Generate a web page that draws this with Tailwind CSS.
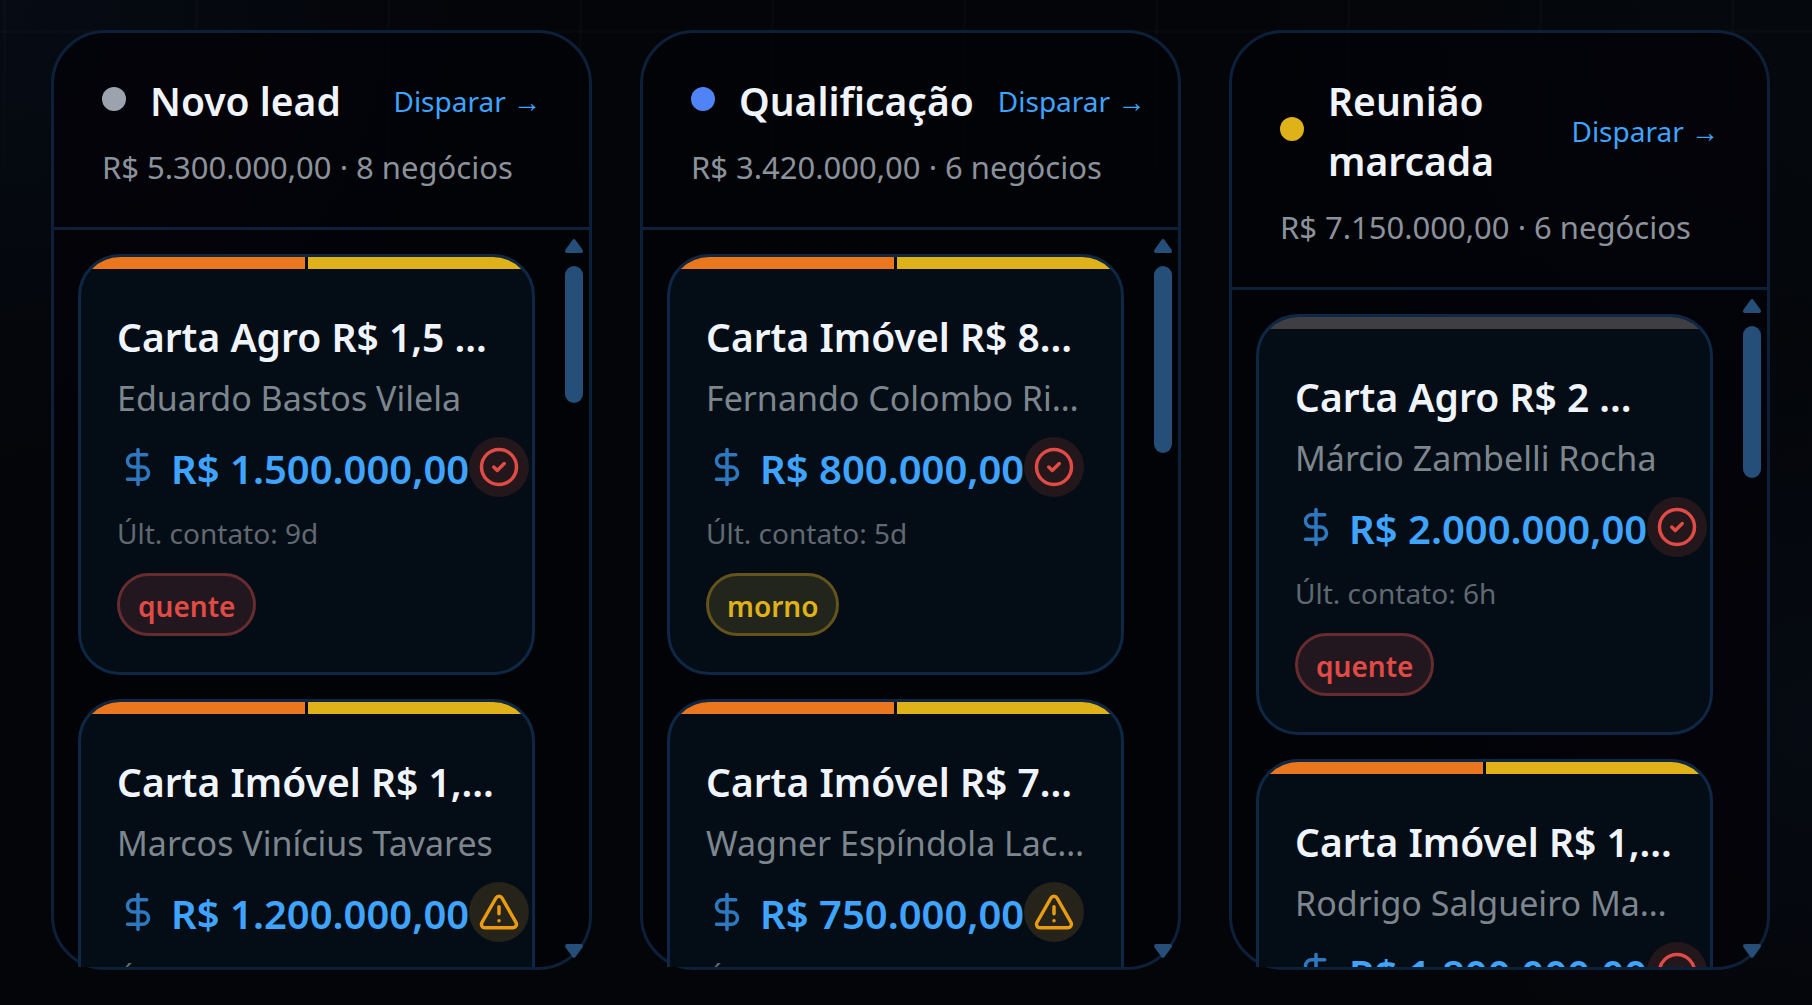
<!DOCTYPE html>
<html lang="pt-BR">
<head>
<meta charset="utf-8">
<meta name="viewport" content="width=device-width, initial-scale=1">
<title>Funil de negócios</title>
<script src="https://cdn.jsdelivr.net/npm/@tailwindcss/browser@4"></script>
</head>
<body class="relative isolate h-screen overflow-hidden bg-[#040509] font-['Noto_Sans','Open_Sans',sans-serif] text-[#f0f4fc]">

<!-- Shared icons -->
<svg class="hidden" aria-hidden="true">
  <symbol id="dollar" viewBox="0 0 24 24"><path d="M12 2v20M17 5H9.5a3.5 3.5 0 0 0 0 7h5a3.5 3.5 0 0 1 0 7H6"/></symbol>
  <symbol id="check" viewBox="0 0 24 24"><circle cx="12" cy="12" r="10"/><path d="m9 12 2 2 4-4"/></symbol>
  <symbol id="alert" viewBox="0 0 24 24"><path d="m21.73 18-8-14a2 2 0 0 0-3.48 0l-8 14A2 2 0 0 0 4 21h16a2 2 0 0 0 1.73-3M12 9v4M12 17h.01"/></symbol>
  <symbol id="up" viewBox="0 0 18 14"><path d="M7.3 1.2Q9-1 10.7 1.2L17.4 10.5Q19 14 15.8 14H2.2Q-1 14 .6 10.5Z"/></symbol>
  <symbol id="down" viewBox="0 0 18 14"><path d="M7.3 12.8Q9 15 10.7 12.8L17.4 3.5Q19 0 15.8 0H2.2Q-1 0 .6 3.5Z"/></symbol>
</svg>

<!-- Backdrop: soft glows and a faint grid -->
<div class="absolute inset-0 -z-10 bg-[radial-gradient(circle_at_0%_0%,#060b14_0%,transparent_22%),radial-gradient(circle_at_100%_72%,#060a12_0%,transparent_20%),radial-gradient(circle_at_100%_0%,#05090d_0%,transparent_26%)]"></div>
<div class="absolute inset-0 -z-10 bg-[linear-gradient(to_right,#ffffff05_3px,transparent_3px),linear-gradient(to_bottom,#ffffff05_3px,transparent_3px)] bg-[length:192px_192px] bg-[position:3px_30px] mask-[linear-gradient(to_bottom,black,transparent_24%)]"></div>

<main class="flex h-full gap-12 pt-[30px] pr-[42px] pb-[35px] pl-[51px]">

  <section class="flex min-w-0 flex-1 flex-col rounded-[54px] border-3 border-[#0d2039] bg-[#020307]/80">
    <header class="border-b-3 border-[#0d2039] px-12 pt-[38px] pb-[35px]">
      <div class="flex items-center justify-between gap-6">
        <div class="flex items-center gap-6">
          <span class="mb-1 size-6 shrink-0 rounded-full bg-[#9ca3af]"></span>
          <h2 class="text-[39px] leading-[60px] font-semibold">Novo lead</h2>
        </div>
        <button type="button" class="shrink-0 text-[28px] leading-[48px] whitespace-nowrap text-[#3fa4ff]">Disparar →</button>
      </div>
      <p class="mt-3 text-[31px] leading-[49px] whitespace-nowrap text-[#8b929b]">R$ 5.300.000,00 · 8 negócios</p>
    </header>
    <div class="flex min-h-0 flex-1 overflow-hidden">
      <ul class="flex min-w-0 flex-1 flex-col gap-6 p-6">
        <li class="shrink-0 overflow-hidden rounded-[42px] border-3 border-[#0e2744] bg-[#040d15]">
          <div class="flex h-3 gap-[3px]"><span class="flex-1 bg-[#ea761e]"></span><span class="flex-1 bg-[#e0b219]"></span></div>
          <div class="px-9 pt-[38px] pb-9 whitespace-nowrap">
            <h3 class="text-[39px] leading-[60px] font-semibold">Carta Agro R$ 1,5 …</h3>
            <p class="text-[34px] leading-[62px] text-[#7d868e]">Eduardo Bastos Vilela</p>
            <div class="mt-2 flex h-[60px] items-center">
              <svg class="mr-3 size-[42px] shrink-0 fill-none stroke-[#2d78bf] stroke-2" stroke-linecap="round" stroke-linejoin="round"><use href="#dollar"/></svg>
              <span class="pt-1 text-[40px] leading-[60px] font-semibold text-[#3fa4ff]">R$ 1.500.000,00</span>
              <span class="flex size-[60px] shrink-0 items-center justify-center rounded-full bg-[#23171c]"><svg class="size-[42px] fill-none stroke-[#e04b46] stroke-2" stroke-linecap="round" stroke-linejoin="round"><use href="#check"/></svg></span>
            </div>
            <p class="mt-3 text-[28px] leading-[48px] text-[#606971]">Últ. contato: 9d</p>
            <span class="mt-4 flex h-[63px] w-fit items-center rounded-full border-3 border-[#672c2e] bg-[#23171f] px-[18px] pt-[2px] text-[28px] font-semibold text-[#e04b46]">quente</span>
          </div>
        </li>
        <li class="shrink-0 overflow-hidden rounded-[42px] border-3 border-[#0e2744] bg-[#040d15]">
          <div class="flex h-3 gap-[3px]"><span class="flex-1 bg-[#ea761e]"></span><span class="flex-1 bg-[#e0b219]"></span></div>
          <div class="px-9 pt-[38px] pb-9 whitespace-nowrap">
            <h3 class="text-[39px] leading-[60px] font-semibold">Carta Imóvel R$ 1,…</h3>
            <p class="text-[34px] leading-[62px] text-[#7d868e]">Marcos Vinícius Tavares</p>
            <div class="mt-2 flex h-[60px] items-center">
              <svg class="mr-3 size-[42px] shrink-0 fill-none stroke-[#2d78bf] stroke-2" stroke-linecap="round" stroke-linejoin="round"><use href="#dollar"/></svg>
              <span class="pt-1 text-[40px] leading-[60px] font-semibold text-[#3fa4ff]">R$ 1.200.000,00</span>
              <span class="flex size-[60px] shrink-0 items-center justify-center rounded-full bg-[#26231a]"><svg class="size-[42px] fill-none stroke-[#e99c12] stroke-2" stroke-linecap="round" stroke-linejoin="round"><use href="#alert"/></svg></span>
            </div>
            <p class="mt-3 text-[28px] leading-[48px] text-[#606971]">Últ. contato: 3d</p>
          </div>
        </li>
      </ul>
      <div class="flex w-[30px] shrink-0 flex-col items-center py-[9px]" aria-hidden="true">
        <svg class="h-[14px] w-[18px] shrink-0 fill-[#254f78]"><use href="#up"/></svg>
        <span class="mt-[13px] h-[137px] w-[18px] rounded-full bg-[#254f78]"></span>
        <svg class="mt-auto h-[14px] w-[18px] shrink-0 fill-[#254f78]"><use href="#down"/></svg>
      </div>
    </div>
  </section>

  <section class="flex min-w-0 flex-1 flex-col rounded-[54px] border-3 border-[#0d2039] bg-[#020307]/80">
    <header class="border-b-3 border-[#0d2039] px-12 pt-[38px] pb-[35px]">
      <div class="flex items-center justify-between gap-6">
        <div class="flex items-center gap-6">
          <span class="mb-1 size-6 shrink-0 rounded-full bg-[#4f83f6]"></span>
          <h2 class="text-[39px] leading-[60px] font-semibold">Qualificação</h2>
        </div>
        <button type="button" class="shrink-0 text-[28px] leading-[48px] whitespace-nowrap text-[#3fa4ff]">Disparar →</button>
      </div>
      <p class="mt-3 text-[31px] leading-[49px] whitespace-nowrap text-[#8b929b]">R$ 3.420.000,00 · 6 negócios</p>
    </header>
    <div class="flex min-h-0 flex-1 overflow-hidden">
      <ul class="flex min-w-0 flex-1 flex-col gap-6 p-6">
        <li class="shrink-0 overflow-hidden rounded-[42px] border-3 border-[#0e2744] bg-[#040d15]">
          <div class="flex h-3 gap-[3px]"><span class="flex-1 bg-[#ea761e]"></span><span class="flex-1 bg-[#e0b219]"></span></div>
          <div class="px-9 pt-[38px] pb-9 whitespace-nowrap">
            <h3 class="text-[39px] leading-[60px] font-semibold">Carta Imóvel R$ 8…</h3>
            <p class="text-[34px] leading-[62px] text-[#7d868e]">Fernando Colombo Ri…</p>
            <div class="mt-2 flex h-[60px] items-center">
              <svg class="mr-3 size-[42px] shrink-0 fill-none stroke-[#2d78bf] stroke-2" stroke-linecap="round" stroke-linejoin="round"><use href="#dollar"/></svg>
              <span class="pt-1 text-[40px] leading-[60px] font-semibold text-[#3fa4ff]">R$ 800.000,00</span>
              <span class="flex size-[60px] shrink-0 items-center justify-center rounded-full bg-[#23171c]"><svg class="size-[42px] fill-none stroke-[#e04b46] stroke-2" stroke-linecap="round" stroke-linejoin="round"><use href="#check"/></svg></span>
            </div>
            <p class="mt-3 text-[28px] leading-[48px] text-[#606971]">Últ. contato: 5d</p>
            <span class="mt-4 flex h-[63px] w-fit items-center rounded-full border-3 border-[#64531a] bg-[#22251b] px-[18px] pt-[2px] text-[28px] font-semibold text-[#dfb11a]">morno</span>
          </div>
        </li>
        <li class="shrink-0 overflow-hidden rounded-[42px] border-3 border-[#0e2744] bg-[#040d15]">
          <div class="flex h-3 gap-[3px]"><span class="flex-1 bg-[#ea761e]"></span><span class="flex-1 bg-[#e0b219]"></span></div>
          <div class="px-9 pt-[38px] pb-9 whitespace-nowrap">
            <h3 class="text-[39px] leading-[60px] font-semibold">Carta Imóvel R$ 7…</h3>
            <p class="text-[34px] leading-[62px] text-[#7d868e]">Wagner Espíndola Lac…</p>
            <div class="mt-2 flex h-[60px] items-center">
              <svg class="mr-3 size-[42px] shrink-0 fill-none stroke-[#2d78bf] stroke-2" stroke-linecap="round" stroke-linejoin="round"><use href="#dollar"/></svg>
              <span class="pt-1 text-[40px] leading-[60px] font-semibold text-[#3fa4ff]">R$ 750.000,00</span>
              <span class="flex size-[60px] shrink-0 items-center justify-center rounded-full bg-[#26231a]"><svg class="size-[42px] fill-none stroke-[#e99c12] stroke-2" stroke-linecap="round" stroke-linejoin="round"><use href="#alert"/></svg></span>
            </div>
            <p class="mt-3 text-[28px] leading-[48px] text-[#606971]">Últ. contato: 3d</p>
          </div>
        </li>
      </ul>
      <div class="flex w-[30px] shrink-0 flex-col items-center py-[9px]" aria-hidden="true">
        <svg class="h-[14px] w-[18px] shrink-0 fill-[#254f78]"><use href="#up"/></svg>
        <span class="mt-[13px] h-[187px] w-[18px] rounded-full bg-[#254f78]"></span>
        <svg class="mt-auto h-[14px] w-[18px] shrink-0 fill-[#254f78]"><use href="#down"/></svg>
      </div>
    </div>
  </section>

  <section class="flex min-w-0 flex-1 flex-col rounded-[54px] border-3 border-[#0d2039] bg-[#020307]/80">
    <header class="border-b-3 border-[#0d2039] px-12 pt-[38px] pb-[35px]">
      <div class="flex items-center justify-between gap-6">
        <div class="flex items-center gap-6">
          <span class="mb-1 size-6 shrink-0 rounded-full bg-[#e0b219]"></span>
          <h2 class="text-[39px] leading-[60px] font-semibold">Reunião marcada</h2>
        </div>
        <button type="button" class="shrink-0 text-[28px] leading-[48px] whitespace-nowrap text-[#3fa4ff]">Disparar →</button>
      </div>
      <p class="mt-3 text-[31px] leading-[49px] whitespace-nowrap text-[#8b929b]">R$ 7.150.000,00 · 6 negócios</p>
    </header>
    <div class="flex min-h-0 flex-1 overflow-hidden">
      <ul class="flex min-w-0 flex-1 flex-col gap-6 p-6">
        <li class="shrink-0 overflow-hidden rounded-[42px] border-3 border-[#0e2744] bg-[#040d15]">
          <div class="h-3 bg-[#3f3f43]"></div>
          <div class="px-9 pt-[38px] pb-9 whitespace-nowrap">
            <h3 class="text-[39px] leading-[60px] font-semibold">Carta Agro R$ 2 …</h3>
            <p class="text-[34px] leading-[62px] text-[#7d868e]">Márcio Zambelli Rocha</p>
            <div class="mt-2 flex h-[60px] items-center">
              <svg class="mr-3 size-[42px] shrink-0 fill-none stroke-[#2d78bf] stroke-2" stroke-linecap="round" stroke-linejoin="round"><use href="#dollar"/></svg>
              <span class="pt-1 text-[40px] leading-[60px] font-semibold text-[#3fa4ff]">R$ 2.000.000,00</span>
              <span class="flex size-[60px] shrink-0 items-center justify-center rounded-full bg-[#23171c]"><svg class="size-[42px] fill-none stroke-[#e04b46] stroke-2" stroke-linecap="round" stroke-linejoin="round"><use href="#check"/></svg></span>
            </div>
            <p class="mt-3 text-[28px] leading-[48px] text-[#606971]">Últ. contato: 6h</p>
            <span class="mt-4 flex h-[63px] w-fit items-center rounded-full border-3 border-[#672c2e] bg-[#23171f] px-[18px] pt-[2px] text-[28px] font-semibold text-[#e04b46]">quente</span>
          </div>
        </li>
        <li class="shrink-0 overflow-hidden rounded-[42px] border-3 border-[#0e2744] bg-[#040d15]">
          <div class="flex h-3 gap-[3px]"><span class="flex-1 bg-[#ea761e]"></span><span class="flex-1 bg-[#e0b219]"></span></div>
          <div class="px-9 pt-[38px] pb-9 whitespace-nowrap">
            <h3 class="text-[39px] leading-[60px] font-semibold">Carta Imóvel R$ 1,…</h3>
            <p class="text-[34px] leading-[62px] text-[#7d868e]">Rodrigo Salgueiro Ma…</p>
            <div class="mt-2 flex h-[60px] items-center">
              <svg class="mr-3 size-[42px] shrink-0 fill-none stroke-[#2d78bf] stroke-2" stroke-linecap="round" stroke-linejoin="round"><use href="#dollar"/></svg>
              <span class="pt-1 text-[40px] leading-[60px] font-semibold text-[#3fa4ff]">R$ 1.800.000,00</span>
              <span class="flex size-[60px] shrink-0 items-center justify-center rounded-full bg-[#23171c]"><svg class="size-[42px] fill-none stroke-[#e04b46] stroke-2" stroke-linecap="round" stroke-linejoin="round"><use href="#check"/></svg></span>
            </div>
          </div>
        </li>
      </ul>
      <div class="flex w-[30px] shrink-0 flex-col items-center py-[9px]" aria-hidden="true">
        <svg class="h-[14px] w-[18px] shrink-0 fill-[#254f78]"><use href="#up"/></svg>
        <span class="mt-[13px] h-[152px] w-[18px] rounded-full bg-[#254f78]"></span>
        <svg class="mt-auto h-[14px] w-[18px] shrink-0 fill-[#254f78]"><use href="#down"/></svg>
      </div>
    </div>
  </section>

</main>
</body>
</html>
